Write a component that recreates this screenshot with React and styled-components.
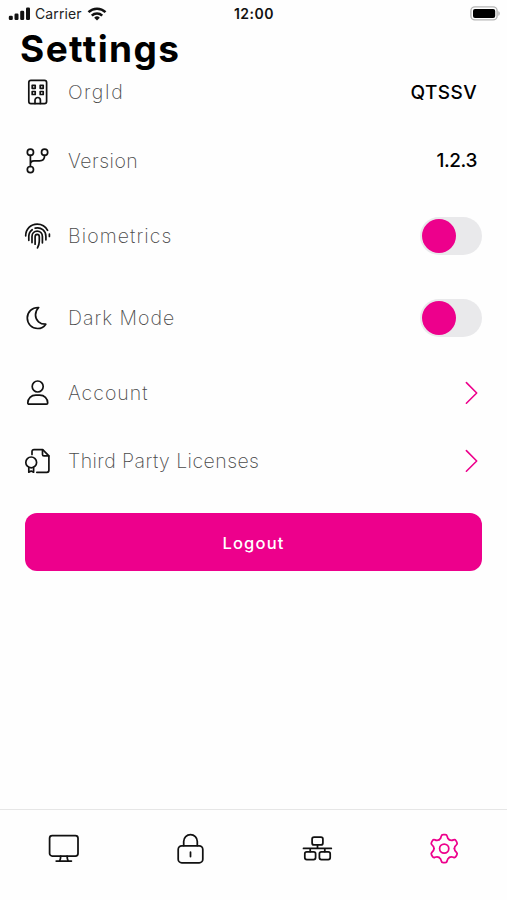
import styled, { createGlobalStyle, css } from 'styled-components';

const GlobalStyle = createGlobalStyle`
  * {
    box-sizing: border-box;
  }

  body {
    margin: 0;
    background-color: #fefefe;
    color: #000;
    font-family: Inter, 'Liberation Sans', sans-serif;
  }
`;

const PINK = '#ed008c';

const Screen = styled.div`
  display: flex;
  flex-direction: column;
  width: 100%;
  height: 900px;
  overflow: hidden;
`;

const StatusBar = styled.header`
  display: grid;
  grid-template-columns: 1fr auto 1fr;
  align-items: center;
  height: 27px;
  padding: 0 7px 0 8px;
`;

const StatusGroup = styled.div`
  display: flex;
  align-items: center;
  justify-content: ${({ $end }) => ($end ? 'flex-end' : 'flex-start')};
  gap: 5px;
`;

const Carrier = styled.span`
  font-size: 14px;
  letter-spacing: 0.1px;
  color: #222;
`;

const Clock = styled.span`
  font-size: 14px;
  font-weight: 600;
  letter-spacing: 0.5px;
  color: #111;
`;

const Title = styled.h1`
  height: 31px;
  margin: 0;
  padding-left: 20px;
  font-size: 37px;
  font-weight: 750;
  line-height: 43px;
  letter-spacing: 1.4px;
  white-space: nowrap;
`;

const List = styled.main`
  display: flex;
  flex-direction: column;
  padding: 0 25px 0 24px;
`;

const Row = styled.div`
  display: flex;
  align-items: center;
  height: ${({ $tall }) => ($tall ? '82px' : '68.4px')};
`;

const Label = styled.span`
  flex: 1;
  margin-left: 16px;
  font-size: 19.5px;
  font-weight: 250;
  letter-spacing: ${({ $spacing }) => $spacing || 0}px;
  color: #4a4a4a;
`;

const Value = styled.span`
  margin-right: 5px;
  font-size: 19px;
  font-weight: 450;
  letter-spacing: ${({ $spacing }) => $spacing || 0}px;
`;

const Toggle = styled.button`
  display: flex;
  align-items: center;
  width: 62px;
  height: 38px;
  padding: 0 2px;
  border: none;
  border-radius: 19px;
  background-color: #e9e9eb;
`;

const Knob = styled.span`
  width: 34px;
  height: 34px;
  border-radius: 50%;
  background-color: ${PINK};
`;

const LogoutButton = styled.button`
  height: 58px;
  margin: 17.5px 0 0 1px;
  border: none;
  border-radius: 12px;
  background-color: ${PINK};
  color: #fff;
  font-family: inherit;
  font-size: 16.5px;
  font-weight: 500;
  line-height: 22px;
  padding: 1px 0 0;
  letter-spacing: 1.2px;
`;

const TabBar = styled.nav`
  display: grid;
  grid-template-columns: repeat(4, 1fr);
  height: 91.5px;
  margin-top: auto;
  border-top: 1.5px solid #e6e6e6;
`;

const Tab = styled.a`
  display: flex;
  justify-content: center;
  padding-top: 22.5px;
  color: ${({ $active }) => ($active ? PINK : '#111')};
`;

const strokes = css`
  flex: none;
  fill: none;
  stroke: currentColor;
  stroke-linecap: round;
  stroke-linejoin: round;
`;

const RowSvg = styled.svg`
  ${strokes}
  width: 28px;
  height: 28px;
  color: #111;
  stroke-width: 1.7;
`;

const TabSvg = styled.svg`
  ${strokes}
  width: 32px;
  height: 32px;
  stroke-width: 1.75;
`;

const ChevronSvg = styled.svg`
  ${strokes}
  width: 14px;
  height: 24px;
  margin-right: 4px;
  color: ${PINK};
  stroke-width: 1.6;
`;

const Chevron = () => (
  <ChevronSvg viewBox="0 0 14 24">
    <path d="M2.4 1.6l10.3 10.4L2.4 22.2" />
  </ChevronSvg>
);

const rowIcons = {
  building: (
    <>
      <rect x="4.8" y="2.4" width="17.8" height="23.2" rx="2.2" />
      <path d="M8.2 7.3h3v3h-3zM16.2 7.3h3v3h-3zM8.2 13.5h3v3h-3zM16.2 13.5h3v3h-3z" />
      <path d="M11 25.4v-3.2a2.7 2.7 0 0 1 5.4 0v3.2" />
    </>
  ),
  branch: (
    <>
      <circle cx="6.4" cy="5.3" r="3.1" />
      <circle cx="20.6" cy="5.3" r="3.1" />
      <circle cx="6.4" cy="22.6" r="3.1" />
      <path d="M6.4 8.4v11.1M20.6 8.4c0 3.4-1.9 5.4-5.2 5.4H10c-2.3 0-3.6 1.3-3.6 3.4" />
    </>
  ),
  fingerprint: (
    <>
      <path d="M1.7 13.8C1.7 7 6.7 2.1 13.2 2.1c4.6 0 8.3 2.3 10.4 6.2M25.4 12.2v2.2" />
      <path d="M4.8 18.3v-3.8c0-3 1.3-5.3 3.4-6.8M11.2 6.2c6-1.4 10.7 2.6 10.7 8.2v3.4" />
      <path d="M8 20.6v-6c0-3.2 2.3-5.4 5.2-5.4s5.2 2.2 5.2 5.4v6.2" />
      <path d="M11.1 22.2v-7.4c0-1.5.9-2.5 2.1-2.5s2.1 1 2.1 2.5v4.3c0 2.7-.7 4.8-1.8 6.8" />
    </>
  ),
  moon: (
    <path d="M14.7 3.5C8 3.2 3.3 8.2 3.3 14.1c0 5.8 4.5 10.4 10.4 10.4 3.4 0 6.3-1.6 8.1-4.3-5.7.2-10.3-3.6-10.3-9.2 0-3 1.3-5.6 3.2-7.5z" />
  ),
  person: (
    <>
      <circle cx="13.7" cy="7.5" r="5.5" />
      <path d="M3.8 24c0-4.7 3.4-7.9 8-7.9h3.9c4.6 0 8 3.2 8 7.9 0 .8-.5 1.2-1.2 1.2H5c-.7 0-1.2-.4-1.2-1.2z" />
    </>
  ),
  license: (
    <>
      <circle cx="7.2" cy="15.4" r="5.4" />
      <path d="M4.8 20.5v4.7l2.4-1.2 2.4 1.2v-4.7" />
      <path d="M8 7.4V4.6c0-1.2.8-2 2-2h8.7l6.2 6.3v14.4c0 1.2-.8 2-2 2H12.8" />
      <path d="M18.5 2.8v4.7c0 .9.5 1.4 1.4 1.4h4.8" />
    </>
  ),
};

// One tooth and half of the valley on each side, turned six times round the hub
const gearTooth =
  'M-5.1-8.83C-3.5-9.75-3.1-10.9-2.9-12.4Q-2.6-14.1-1-14.1H1Q2.6-14.1 2.9-12.4C3.1-10.9 3.5-9.75 5.1-8.83';

const tabIcons = {
  monitor: (
    <>
      <rect x="2.6" y="3.6" width="28.4" height="20.4" rx="2.6" />
      <path d="M13.7 24.2c0 2-.3 3.4-1.2 4.8M20.1 24.2c0 2 .3 3.4 1.2 4.8M9.2 29h15.2" />
    </>
  ),
  lock: (
    <>
      <rect x="4.2" y="13.8" width="24.6" height="17" rx="3.6" />
      <path d="M9.7 13.6V9.4c0-3.8 3-6.7 6.8-6.7s6.8 2.9 6.8 6.7v4.2M16.5 20.2v4.4" />
    </>
  ),
  network: (
    <>
      <rect x="11.1" y="5.1" width="10.8" height="7.8" rx="2" />
      <rect x="3.8" y="19.8" width="10.8" height="7.8" rx="2" />
      <rect x="18.4" y="19.8" width="10.8" height="7.8" rx="2" />
      <path d="M2.5 16.4h27.8M16.5 13v3.2M9.2 16.6v3M23.8 16.6v3" />
    </>
  ),
  gear: (
    <g transform="translate(16.2 16.6)">
      <circle r="4.6" />
      {[0, 60, 120, 180, 240, 300].map((angle) => (
        <path key={angle} d={gearTooth} transform={`rotate(${angle})`} />
      ))}
    </g>
  ),
};

const rows = [
  { icon: 'building', label: 'OrgId', spacing: 1.4, value: 'QTSSV', valueSpacing: 0.4 },
  { icon: 'branch', label: 'Version', spacing: 0.5, value: '1.2.3', valueSpacing: -0.4 },
  { icon: 'fingerprint', label: 'Biometrics', spacing: 1.1, toggle: true },
  { icon: 'moon', label: 'Dark Mode', spacing: 1, toggle: true },
  { icon: 'person', label: 'Account', spacing: 1 },
  { icon: 'license', label: 'Third Party Licenses', spacing: 0.45 },
];

const tabs = ['monitor', 'lock', 'network', 'gear'];

function SettingsRow({ icon, label, spacing, value, valueSpacing, toggle }) {
  return (
    <Row $tall={toggle}>
      <RowSvg viewBox="0 0 28 28">{rowIcons[icon]}</RowSvg>
      <Label $spacing={spacing}>{label}</Label>
      {value && <Value $spacing={valueSpacing}>{value}</Value>}
      {toggle && (
        <Toggle role="switch" aria-checked="false">
          <Knob />
        </Toggle>
      )}
      {!value && !toggle && <Chevron />}
    </Row>
  );
}

export default function App() {
  return (
    <>
      <GlobalStyle />
      <Screen>
        <StatusBar>
          <StatusGroup>
            <svg width="22" height="14" viewBox="0 0 22 14" fill="#111">
              <rect x="0.8" y="8.8" width="4" height="4.2" rx="1.2" />
              <rect x="6.5" y="6.6" width="4" height="6.4" rx="1.2" />
              <rect x="12.2" y="3.8" width="4" height="9.2" rx="1.2" />
              <rect x="18" y="0.4" width="4" height="12.6" rx="1.2" />
            </svg>
            <Carrier>Carrier</Carrier>
            <svg width="20" height="14" viewBox="0 0 20 14" fill="none" stroke="#111" strokeWidth="2.5">
              <path d="M1.5 5.2a12.2 12.2 0 0 1 17 0" />
              <path d="M4.8 8.6a7.4 7.4 0 0 1 10.4 0" />
              <path d="M10 13.6l-2.8-2.9a4 4 0 0 1 5.6 0z" fill="#111" stroke="none" />
            </svg>
          </StatusGroup>
          <Clock>12:00</Clock>
          <StatusGroup $end>
            <svg width="30" height="15" viewBox="0 0 30 15">
              <rect x="0.9" y="0.9" width="26.2" height="13" rx="4" fill="#fff" stroke="#b5b5b5" strokeWidth="1.4" />
              <rect x="3" y="3" width="22.2" height="9" rx="2" fill="#000" />
              <path d="M28.4 5.2c1.7.5 1.7 4 0 4.5z" fill="#aaa" />
            </svg>
          </StatusGroup>
        </StatusBar>
        <Title>Settings</Title>
        <List>
          {rows.map((row) => (
            <SettingsRow key={row.label} {...row} />
          ))}
          <LogoutButton>Logout</LogoutButton>
        </List>
        <TabBar>
          {tabs.map((name) => (
            <Tab key={name} $active={name === 'gear'}>
              <TabSvg viewBox="0 0 32 32">{tabIcons[name]}</TabSvg>
            </Tab>
          ))}
        </TabBar>
      </Screen>
    </>
  );
}
